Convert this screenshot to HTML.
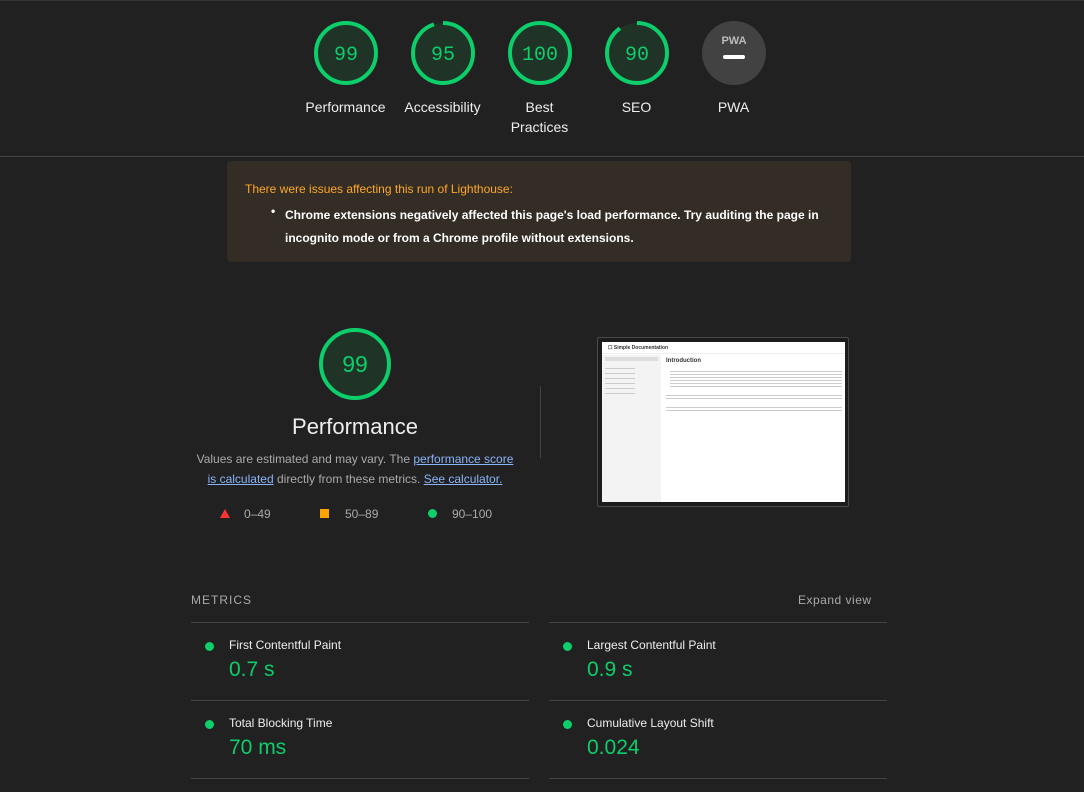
<!DOCTYPE html>
<html><head><meta charset="utf-8"><style>
*{margin:0;padding:0;box-sizing:border-box}
body{width:1084px;height:792px;background:#212121;font-family:"Liberation Sans",Arial,sans-serif;color:#eee;position:relative;overflow:hidden}
.abs{position:absolute}
.g{position:absolute;width:97px;text-align:center;top:20px}
.g svg{display:block;margin:0 auto}
.g .lbl{font-size:14px;color:#eee;margin-top:11px;line-height:20px}
.met{position:absolute;width:338px;height:78px;border-top:1px solid #444}
.met .d{position:absolute;left:14px;top:19px;width:9px;height:9px;border-radius:50%;background:#0cce6b}
.met .t{position:absolute;left:38px;top:15px;font-size:12px;color:#eee}
.met .v{position:absolute;left:38px;top:35px;font-size:21px;color:#0cce6b}
a{color:#8ab4f8;text-decoration:underline}
</style></head><body>
<div class="abs" style="left:0;top:0;width:1084px;height:1px;background:#333"></div>
<div class="abs" style="left:0;top:156px;width:1084px;height:1px;background:#444"></div>

<div class="g" style="left:297px"><svg width="66" height="66"><circle cx="33" cy="33" r="30" fill="#1f3326"/><circle cx="33" cy="33" r="30" fill="none" stroke="#0cce6b" stroke-width="4"/><text x="33" y="40" text-anchor="middle" fill="#0cce6b" font-size="20" font-family="Liberation Mono,monospace">99</text></svg><div class="lbl">Performance</div></div>
<div class="g" style="left:394px"><svg width="66" height="66"><circle cx="33" cy="33" r="30" fill="#1f3326"/><circle cx="33" cy="33" r="30" fill="none" stroke="#0cce6b" stroke-width="4" stroke-dasharray="179 200" transform="rotate(-90 33 33)"/><text x="33" y="40" text-anchor="middle" fill="#0cce6b" font-size="20" font-family="Liberation Mono,monospace">95</text></svg><div class="lbl">Accessibility</div></div>
<div class="g" style="left:491px"><svg width="66" height="66"><circle cx="33" cy="33" r="30" fill="#1f3326"/><circle cx="33" cy="33" r="30" fill="none" stroke="#0cce6b" stroke-width="4"/><text x="33" y="40" text-anchor="middle" fill="#0cce6b" font-size="20" font-family="Liberation Mono,monospace">100</text></svg><div class="lbl">Best<br>Practices</div></div>
<div class="g" style="left:588px"><svg width="66" height="66"><circle cx="33" cy="33" r="30" fill="#1f3326"/><circle cx="33" cy="33" r="30" fill="none" stroke="#0cce6b" stroke-width="4" stroke-dasharray="170 200" transform="rotate(-90 33 33)"/><text x="33" y="40" text-anchor="middle" fill="#0cce6b" font-size="20" font-family="Liberation Mono,monospace">90</text></svg><div class="lbl">SEO</div></div>
<div class="g" style="left:685px"><svg width="66" height="66"><circle cx="33" cy="33" r="32" fill="#424242"/><text x="33" y="24" text-anchor="middle" fill="#bbb" font-size="11" font-weight="bold" font-family="Liberation Sans,sans-serif">PWA</text><rect x="22" y="35" width="22" height="4" rx="2" fill="#fff"/></svg><div class="lbl">PWA</div></div>

<div class="abs" style="left:227px;top:161px;width:624px;height:101px;background:#332d25;border-radius:4px">
<div class="abs" style="left:18px;top:21px;font-size:12px;color:#ffa726">There were issues affecting this run of Lighthouse:</div>
<div class="abs" style="left:44px;top:43px;font-size:12px;font-weight:bold;color:#fff">•</div>
<div class="abs" style="left:58px;top:43px;width:550px;font-size:12px;font-weight:bold;color:#fff;line-height:23px">Chrome extensions negatively affected this page's load performance. Try auditing the page in incognito mode or from a Chrome profile without extensions.</div>
</div>

<svg class="abs" style="left:318px;top:327px" width="74" height="74"><circle cx="37" cy="37" r="34" fill="#1f3326"/><circle cx="37" cy="37" r="34" fill="none" stroke="#0cce6b" stroke-width="4"/><text x="37" y="45" text-anchor="middle" fill="#0cce6b" font-size="23" font-family="Liberation Sans,sans-serif">99</text></svg>
<div class="abs" style="left:190px;top:414px;width:330px;text-align:center;font-size:22px;color:#eee">Performance</div>
<div class="abs" style="left:195px;top:449px;width:320px;text-align:center;font-size:12px;color:#aaa;line-height:20px">Values are estimated and may vary. The <a>performance score is calculated</a> directly from these metrics. <a>See calculator.</a></div>
<div class="abs" style="left:220px;top:509px;width:0;height:0;border-left:5px solid transparent;border-right:5px solid transparent;border-bottom:9px solid #f33"></div>
<div class="abs" style="left:244px;top:507px;font-size:12px;color:#aaa">0–49</div>
<div class="abs" style="left:320px;top:509px;width:9px;height:9px;background:#ffa400"></div>
<div class="abs" style="left:345px;top:507px;font-size:12px;color:#aaa">50–89</div>
<div class="abs" style="left:428px;top:509px;width:9px;height:9px;border-radius:50%;background:#0cce6b"></div>
<div class="abs" style="left:452px;top:507px;font-size:12px;color:#aaa">90–100</div>
<div class="abs" style="left:540px;top:386px;width:1px;height:72px;background:#444"></div>

<div class="abs" style="left:597px;top:337px;width:252px;height:170px;border:1px solid #4a4a4a;border-radius:2px;background:#1c1c1c">
<div class="abs" style="left:4px;top:4px;width:243px;height:160px;background:#fff">
 <div class="abs" style="left:0;top:0;width:243px;height:12px;border-bottom:1px solid #eee;font-size:5px;color:#333;padding:3px 6px;font-weight:bold">☐ Simple Documentation</div>
 <div class="abs" style="left:0;top:13px;width:59px;height:147px;background:#f3f3f3"></div>
 <div class="abs" style="left:3px;top:15px;width:53px;height:4px;background:#ddd"></div>
 <div class="abs" style="left:3px;top:22px;width:30px;height:30px;background:repeating-linear-gradient(#f3f3f3 0 4px,#ccc 4px 5px)"></div>
 <div class="abs" style="left:64px;top:16px;font-size:6px;font-weight:bold;color:#333">Introduction</div>
 <div class="abs" style="left:68px;top:27px;width:172px;height:18px;background:repeating-linear-gradient(#fff 0 2px,#ccc 2px 3px)"></div>
 <div class="abs" style="left:64px;top:51px;width:176px;height:6px;background:repeating-linear-gradient(#fff 0 2px,#ccc 2px 3px)"></div>
 <div class="abs" style="left:64px;top:63px;width:176px;height:6px;background:repeating-linear-gradient(#fff 0 2px,#ccc 2px 3px)"></div>
</div></div>

<div class="abs" style="left:191px;top:593px;font-size:12px;color:#aaa;letter-spacing:1px">METRICS</div>
<div class="abs" style="left:798px;top:593px;font-size:12px;color:#aaa;letter-spacing:.5px">Expand view</div>
<div class="met" style="left:191px;top:622px"><div class="d"></div><div class="t">First Contentful Paint</div><div class="v">0.7 s</div></div>
<div class="met" style="left:549px;top:622px"><div class="d"></div><div class="t">Largest Contentful Paint</div><div class="v">0.9 s</div></div>
<div class="met" style="left:191px;top:700px"><div class="d"></div><div class="t">Total Blocking Time</div><div class="v">70 ms</div></div>
<div class="met" style="left:549px;top:700px"><div class="d"></div><div class="t">Cumulative Layout Shift</div><div class="v">0.024</div></div>
<div class="abs" style="left:191px;top:778px;width:338px;height:1px;background:#444"></div>
<div class="abs" style="left:549px;top:778px;width:338px;height:1px;background:#444"></div>
</body></html>
